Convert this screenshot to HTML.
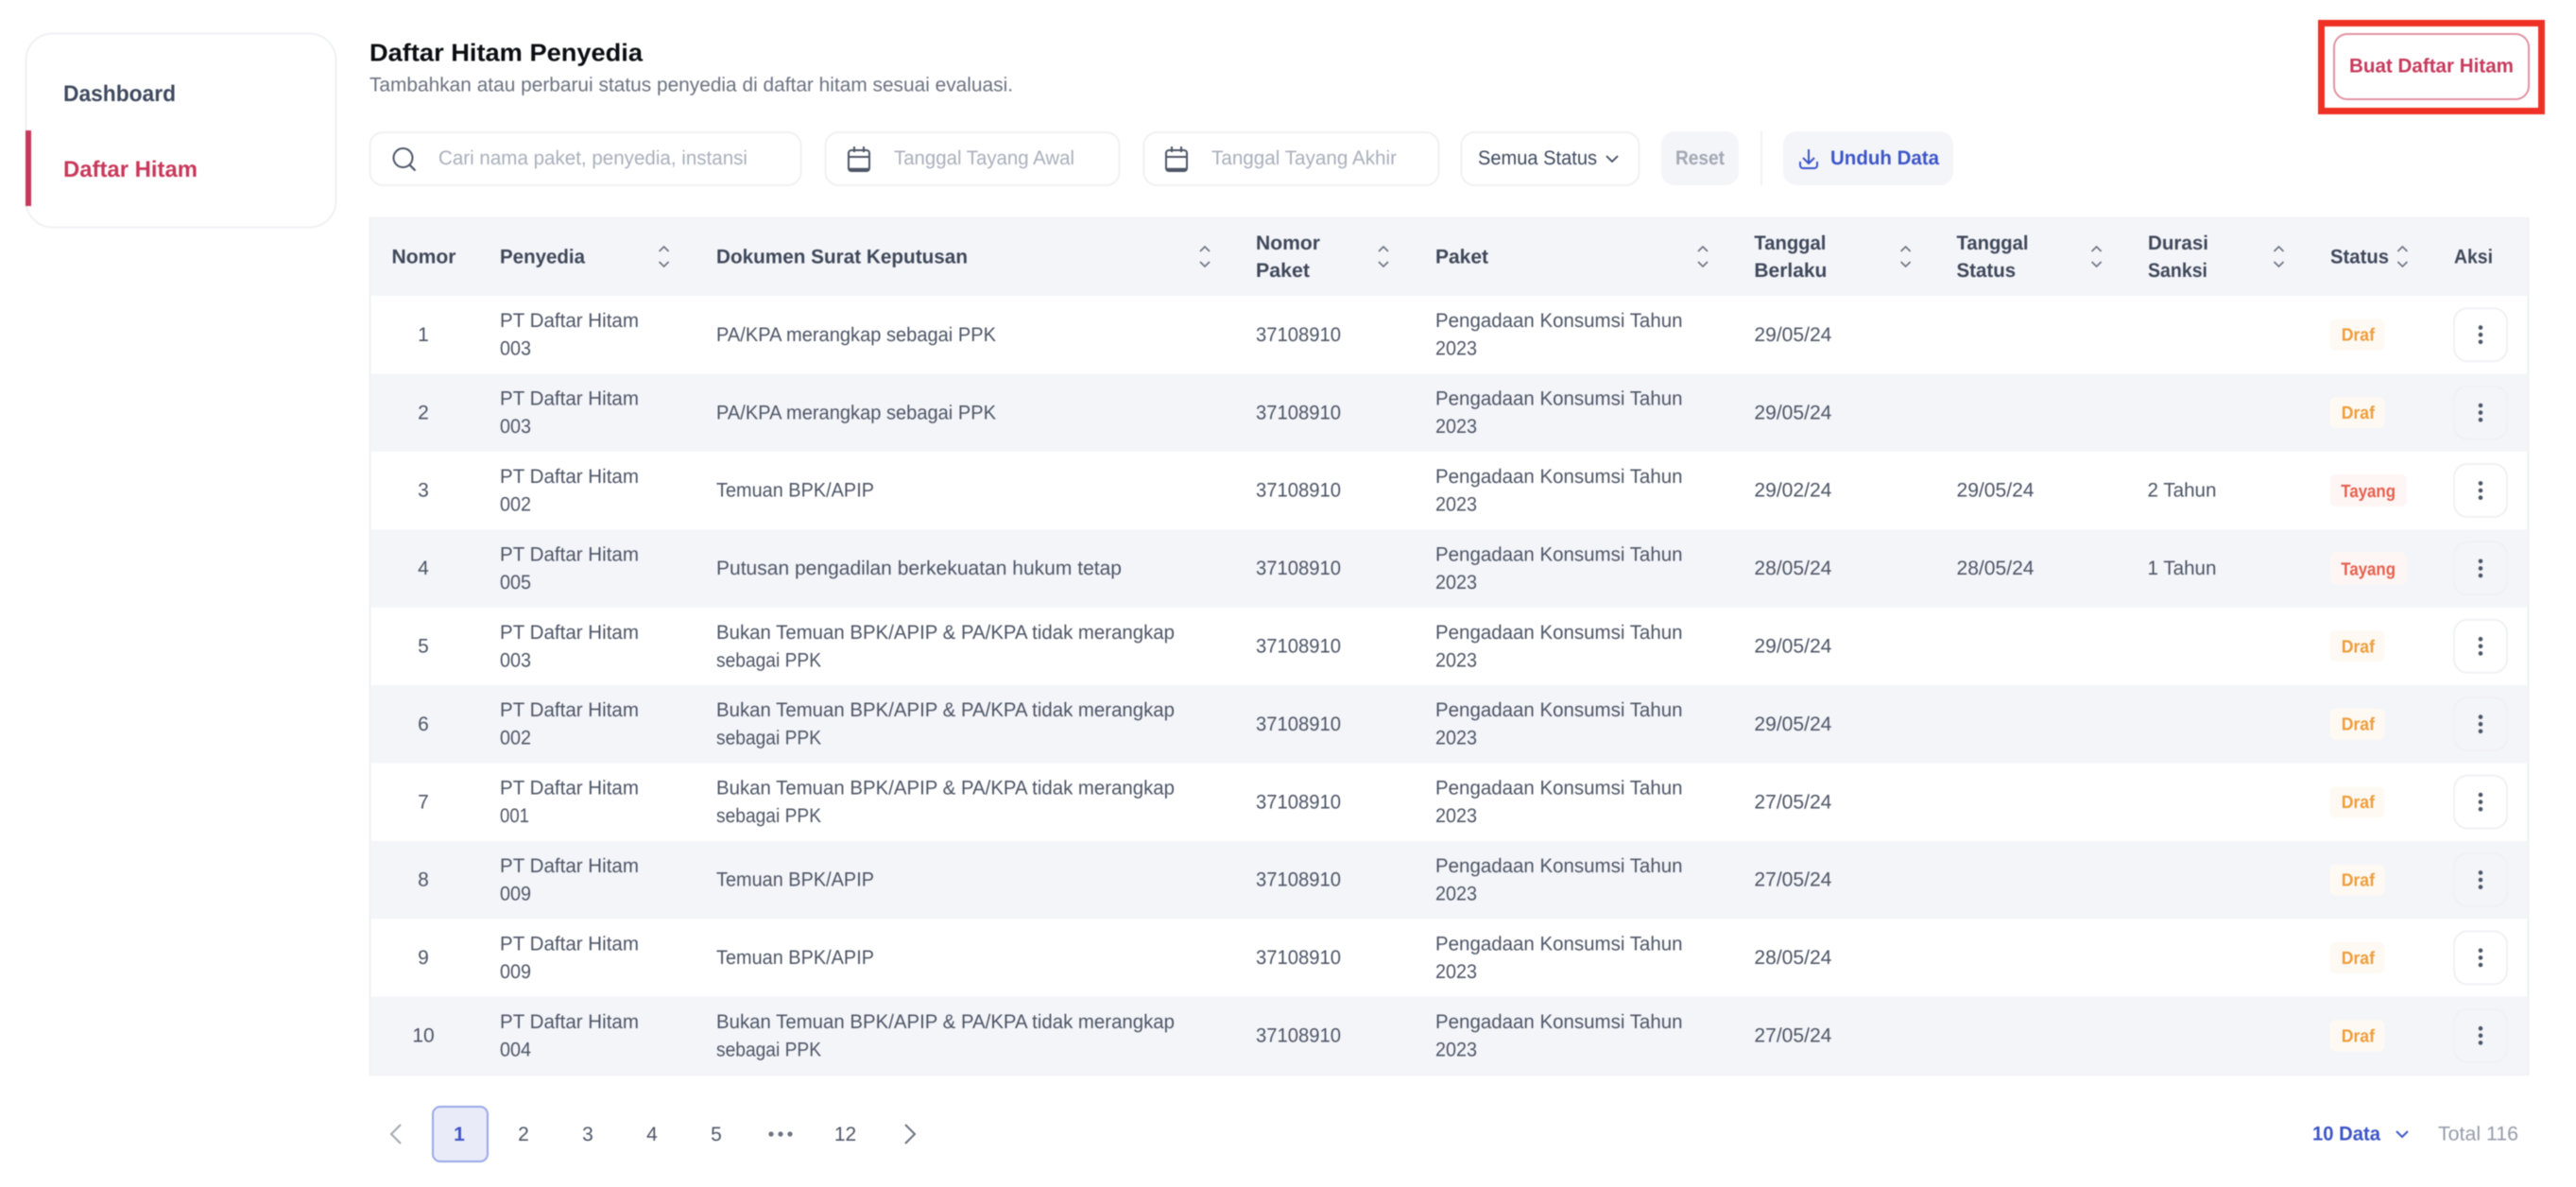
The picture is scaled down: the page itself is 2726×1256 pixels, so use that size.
<!DOCTYPE html>
<html lang="id">
<head>
<meta charset="utf-8">
<title>Daftar Hitam Penyedia</title>
<style>
html,body{margin:0;padding:0;background:#fff;width:2726px;height:1256px;overflow:hidden}
svg{display:block;filter:blur(.45px)}
text{font-family:"Liberation Sans",Arial,sans-serif;font-size:21px;fill:#4d5566;text-rendering:geometricPrecision}
.h{font-weight:700;fill:#3f485a}
.n{text-anchor:middle}
.ph{fill:#a9afbb}
.d{font-weight:700;fill:#ef9d3c;font-size:19px}
.t{font-weight:700;fill:#e5604f;font-size:19px}
.s{fill:none;stroke:#6b7280;stroke-width:1.6}
.box{fill:#fff;stroke:#f0f1f4;stroke-width:2}
</style>
</head>
<body>
<svg width="2726" height="1256" viewBox="0 0 2726 1256" xmlns="http://www.w3.org/2000/svg">
<defs>
<g id="sort"><path class="s" d="M-5 -5.5L0 -10.5L5 -5.5M-5 5.5L0 10.5L5 5.5"/></g>
<g id="dots" fill="#4d5566"><circle cx="2625" cy="-7.6" r="2.3"/><circle cx="2625" cy="0" r="2.3"/><circle cx="2625" cy="7.6" r="2.3"/></g>
<g id="cal" fill="none" stroke="#4d5566" stroke-width="2"><rect x="1" y="4" width="22" height="22" rx="3"/><path d="M1 11H23M7 0V6M17 0V6" /><path d="M2 24H22" stroke-width="2.5"/></g>
</defs>
<rect width="2726" height="1256" fill="#fff"/>

<!-- sidebar -->
<rect x="27.5" y="35.5" width="328" height="205" rx="28" fill="#fff" stroke="#f0f1f4" stroke-width="2"/>
<rect x="27" y="138" width="6" height="80" fill="#c8385a"/>
<text x="67" y="107" textLength="119" lengthAdjust="spacingAndGlyphs" style="font-size:24px;font-weight:700;fill:#3f4a5f">Dashboard</text>
<text x="67" y="187" textLength="142" lengthAdjust="spacingAndGlyphs" style="font-size:24px;font-weight:700;fill:#c8385a">Daftar Hitam</text>

<!-- heading -->
<text x="391" y="64.3" textLength="289" lengthAdjust="spacingAndGlyphs" style="font-size:26px;font-weight:700;fill:#0b0d12">Daftar Hitam Penyedia</text>
<text x="391" y="96.7" textLength="681" lengthAdjust="spacingAndGlyphs" style="fill:#6b7280">Tambahkan atau perbarui status penyedia di daftar hitam sesuai evaluasi.</text>

<!-- toolbar -->
<rect x="391.5" y="140" width="456" height="56" rx="14" class="box"/>
<circle cx="426.5" cy="167" r="10" fill="none" stroke="#4d5566" stroke-width="2"/>
<path d="M433.5 174.5L439.5 180.5" fill="none" stroke="#4d5566" stroke-width="2.2"/>
<text x="464" y="174" textLength="327" lengthAdjust="spacingAndGlyphs" class="ph">Cari nama paket, penyedia, instansi</text>

<rect x="873.5" y="140" width="311" height="56" rx="14" class="box"/>
<use href="#cal" x="897" y="155"/>
<text x="946" y="174" textLength="191" lengthAdjust="spacingAndGlyphs" class="ph">Tanggal Tayang Awal</text>

<rect x="1210.5" y="140" width="312" height="56" rx="14" class="box"/>
<use href="#cal" x="1233" y="155"/>
<text x="1282" y="174" textLength="196" lengthAdjust="spacingAndGlyphs" class="ph">Tanggal Tayang Akhir</text>

<rect x="1546.5" y="140" width="188" height="56" rx="14" class="box"/>
<text x="1564" y="174" textLength="126" lengthAdjust="spacingAndGlyphs" style="fill:#3f4a5f">Semua Status</text>
<path d="M1700 165L1706 171L1712 165" fill="none" stroke="#3f4a5f" stroke-width="1.8"/>

<rect x="1758" y="139" width="82" height="57" rx="14" fill="#f4f5f9"/>
<text x="1773" y="174" textLength="52" lengthAdjust="spacingAndGlyphs" style="fill:#a2a8b4;font-weight:700">Reset</text>

<rect x="1863" y="139" width="2" height="57" fill="#f0f1f4"/>

<rect x="1887" y="139" width="180" height="57" rx="14" fill="#f4f5f9"/>
<path d="M1914 158V172M1908 167L1914 173L1920 167M1905 171V175A3 3 0 0 0 1908 178H1920A3 3 0 0 0 1923 175V171" fill="none" stroke="#3d55c8" stroke-width="2"/>
<text x="1937" y="174" textLength="115" lengthAdjust="spacingAndGlyphs" style="font-weight:700;fill:#3d55c8">Unduh Data</text>

<!-- primary button with annotation -->
<rect x="2456.5" y="24.5" width="233" height="93" fill="none" stroke="#ee3124" stroke-width="7"/>
<rect x="2470" y="36" width="206" height="69" rx="14" fill="#fff" stroke="#e391a3" stroke-width="2"/>
<text x="2486" y="76.7" textLength="174" lengthAdjust="spacingAndGlyphs" style="font-weight:700;fill:#c73a5c">Buat Daftar Hitam</text>

<!-- table -->
<rect x="391.5" y="231" width="2284" height="906" fill="#fff" stroke="#eff0f3" stroke-width="2"/>
<rect x="392" y="231" width="2283" height="82" fill="#f4f5f9"/>
<rect x="392" y="395.4" width="2283" height="82.4" fill="#f4f5f9"/>
<rect x="392" y="560.2" width="2283" height="82.4" fill="#f4f5f9"/>
<rect x="392" y="725" width="2283" height="82.4" fill="#f4f5f9"/>
<rect x="392" y="889.8" width="2283" height="82.4" fill="#f4f5f9"/>
<rect x="392" y="1054.6" width="2283" height="82.4" fill="#f4f5f9"/>

<!-- header -->
<text class="h" x="414.5" y="278.3" textLength="68" lengthAdjust="spacingAndGlyphs">Nomor</text>
<text class="h" x="529" y="278.3" textLength="90" lengthAdjust="spacingAndGlyphs">Penyedia</text>
<use href="#sort" x="702.6" y="271.5"/>
<text class="h" x="758" y="278.3" textLength="266" lengthAdjust="spacingAndGlyphs">Dokumen Surat Keputusan</text>
<use href="#sort" x="1275" y="271.5"/>
<text class="h" x="1329" y="264" textLength="68" lengthAdjust="spacingAndGlyphs">Nomor</text>
<text class="h" x="1329" y="293" textLength="57" lengthAdjust="spacingAndGlyphs">Paket</text>
<use href="#sort" x="1464" y="271.5"/>
<text class="h" x="1519" y="278.3" textLength="56" lengthAdjust="spacingAndGlyphs">Paket</text>
<use href="#sort" x="1802" y="271.5"/>
<text class="h" x="1856.4" y="264" textLength="76" lengthAdjust="spacingAndGlyphs">Tanggal</text>
<text class="h" x="1856.4" y="293" textLength="77" lengthAdjust="spacingAndGlyphs">Berlaku</text>
<use href="#sort" x="2016.6" y="271.5"/>
<text class="h" x="2070.5" y="264" textLength="76" lengthAdjust="spacingAndGlyphs">Tanggal</text>
<text class="h" x="2070.5" y="293" textLength="62.6" lengthAdjust="spacingAndGlyphs">Status</text>
<use href="#sort" x="2218.6" y="271.5"/>
<text class="h" x="2273" y="264" textLength="64" lengthAdjust="spacingAndGlyphs">Durasi</text>
<text class="h" x="2273" y="293" textLength="63" lengthAdjust="spacingAndGlyphs">Sanksi</text>
<use href="#sort" x="2411.5" y="271.5"/>
<text class="h" x="2466" y="278.3" textLength="62" lengthAdjust="spacingAndGlyphs">Status</text>
<use href="#sort" x="2542.4" y="271.5"/>
<text class="h" x="2597" y="278.3" textLength="41" lengthAdjust="spacingAndGlyphs">Aksi</text>

<!-- row 1 -->
<g transform="translate(0,354.2)">
<text class="n" x="448" y="6.7">1</text>
<text x="529" y="-8" textLength="147" lengthAdjust="spacingAndGlyphs">PT Daftar Hitam</text>
<text x="529" y="21.5" textLength="33" lengthAdjust="spacingAndGlyphs">003</text>
<text x="758" y="6.7" textLength="296" lengthAdjust="spacingAndGlyphs">PA/KPA merangkap sebagai PPK</text>
<text x="1329" y="6.7" textLength="90" lengthAdjust="spacingAndGlyphs">37108910</text>
<text x="1519" y="-8" textLength="261.5" lengthAdjust="spacingAndGlyphs">Pengadaan Konsumsi Tahun</text>
<text x="1519" y="21.5" textLength="44" lengthAdjust="spacingAndGlyphs">2023</text>
<text x="1856.4" y="6.7" textLength="82" lengthAdjust="spacingAndGlyphs">29/05/24</text>
<rect x="2465.5" y="-16.5" width="58" height="33" rx="6" fill="#fefaf3"/>
<text class="d" x="2477.7" y="6.5" textLength="35.3" lengthAdjust="spacingAndGlyphs">Draf</text>
<rect x="2597" y="-28" width="56" height="56" rx="14" class="box"/>
<use href="#dots"/>
</g>
<!-- row 2 -->
<g transform="translate(0,436.6)">
<text class="n" x="448" y="6.7">2</text>
<text x="529" y="-8" textLength="147" lengthAdjust="spacingAndGlyphs">PT Daftar Hitam</text>
<text x="529" y="21.5" textLength="33" lengthAdjust="spacingAndGlyphs">003</text>
<text x="758" y="6.7" textLength="296" lengthAdjust="spacingAndGlyphs">PA/KPA merangkap sebagai PPK</text>
<text x="1329" y="6.7" textLength="90" lengthAdjust="spacingAndGlyphs">37108910</text>
<text x="1519" y="-8" textLength="261.5" lengthAdjust="spacingAndGlyphs">Pengadaan Konsumsi Tahun</text>
<text x="1519" y="21.5" textLength="44" lengthAdjust="spacingAndGlyphs">2023</text>
<text x="1856.4" y="6.7" textLength="82" lengthAdjust="spacingAndGlyphs">29/05/24</text>
<rect x="2465.5" y="-16.5" width="58" height="33" rx="6" fill="#fefaf3"/>
<text class="d" x="2477.7" y="6.5" textLength="35.3" lengthAdjust="spacingAndGlyphs">Draf</text>
<rect x="2597" y="-28" width="56" height="56" rx="14" class="box" style="fill:none"/>
<use href="#dots"/>
</g>
<!-- row 3 -->
<g transform="translate(0,519)">
<text class="n" x="448" y="6.7">3</text>
<text x="529" y="-8" textLength="147" lengthAdjust="spacingAndGlyphs">PT Daftar Hitam</text>
<text x="529" y="21.5" textLength="33" lengthAdjust="spacingAndGlyphs">002</text>
<text x="758" y="6.7" textLength="167" lengthAdjust="spacingAndGlyphs">Temuan BPK/APIP</text>
<text x="1329" y="6.7" textLength="90" lengthAdjust="spacingAndGlyphs">37108910</text>
<text x="1519" y="-8" textLength="261.5" lengthAdjust="spacingAndGlyphs">Pengadaan Konsumsi Tahun</text>
<text x="1519" y="21.5" textLength="44" lengthAdjust="spacingAndGlyphs">2023</text>
<text x="1856.4" y="6.7" textLength="82" lengthAdjust="spacingAndGlyphs">29/02/24</text>
<text x="2070.5" y="6.7" textLength="82" lengthAdjust="spacingAndGlyphs">29/05/24</text>
<text x="2272.5" y="6.7" textLength="73" lengthAdjust="spacingAndGlyphs">2 Tahun</text>
<rect x="2466" y="-17" width="81" height="34" rx="6" fill="#fef6f4"/>
<text class="t" x="2477.3" y="7" textLength="57.7" lengthAdjust="spacingAndGlyphs">Tayang</text>
<rect x="2597" y="-28" width="56" height="56" rx="14" class="box"/>
<use href="#dots"/>
</g>
<!-- row 4 -->
<g transform="translate(0,601.4)">
<text class="n" x="448" y="6.7">4</text>
<text x="529" y="-8" textLength="147" lengthAdjust="spacingAndGlyphs">PT Daftar Hitam</text>
<text x="529" y="21.5" textLength="33" lengthAdjust="spacingAndGlyphs">005</text>
<text x="758" y="6.7" textLength="429" lengthAdjust="spacingAndGlyphs">Putusan pengadilan berkekuatan hukum tetap</text>
<text x="1329" y="6.7" textLength="90" lengthAdjust="spacingAndGlyphs">37108910</text>
<text x="1519" y="-8" textLength="261.5" lengthAdjust="spacingAndGlyphs">Pengadaan Konsumsi Tahun</text>
<text x="1519" y="21.5" textLength="44" lengthAdjust="spacingAndGlyphs">2023</text>
<text x="1856.4" y="6.7" textLength="82" lengthAdjust="spacingAndGlyphs">28/05/24</text>
<text x="2070.5" y="6.7" textLength="82" lengthAdjust="spacingAndGlyphs">28/05/24</text>
<text x="2272.5" y="6.7" textLength="73" lengthAdjust="spacingAndGlyphs">1 Tahun</text>
<rect x="2466" y="-17" width="81" height="34" rx="6" fill="#fef6f4"/>
<text class="t" x="2477.3" y="7" textLength="57.7" lengthAdjust="spacingAndGlyphs">Tayang</text>
<rect x="2597" y="-28" width="56" height="56" rx="14" class="box" style="fill:none"/>
<use href="#dots"/>
</g>
<!-- row 5 -->
<g transform="translate(0,683.8)">
<text class="n" x="448" y="6.7">5</text>
<text x="529" y="-8" textLength="147" lengthAdjust="spacingAndGlyphs">PT Daftar Hitam</text>
<text x="529" y="21.5" textLength="33" lengthAdjust="spacingAndGlyphs">003</text>
<text x="758" y="-8" textLength="485" lengthAdjust="spacingAndGlyphs">Bukan Temuan BPK/APIP &amp; PA/KPA tidak merangkap</text>
<text x="758" y="21.5" textLength="111" lengthAdjust="spacingAndGlyphs">sebagai PPK</text>
<text x="1329" y="6.7" textLength="90" lengthAdjust="spacingAndGlyphs">37108910</text>
<text x="1519" y="-8" textLength="261.5" lengthAdjust="spacingAndGlyphs">Pengadaan Konsumsi Tahun</text>
<text x="1519" y="21.5" textLength="44" lengthAdjust="spacingAndGlyphs">2023</text>
<text x="1856.4" y="6.7" textLength="82" lengthAdjust="spacingAndGlyphs">29/05/24</text>
<rect x="2465.5" y="-16.5" width="58" height="33" rx="6" fill="#fefaf3"/>
<text class="d" x="2477.7" y="6.5" textLength="35.3" lengthAdjust="spacingAndGlyphs">Draf</text>
<rect x="2597" y="-28" width="56" height="56" rx="14" class="box"/>
<use href="#dots"/>
</g>
<!-- row 6 -->
<g transform="translate(0,766.2)">
<text class="n" x="448" y="6.7">6</text>
<text x="529" y="-8" textLength="147" lengthAdjust="spacingAndGlyphs">PT Daftar Hitam</text>
<text x="529" y="21.5" textLength="33" lengthAdjust="spacingAndGlyphs">002</text>
<text x="758" y="-8" textLength="485" lengthAdjust="spacingAndGlyphs">Bukan Temuan BPK/APIP &amp; PA/KPA tidak merangkap</text>
<text x="758" y="21.5" textLength="111" lengthAdjust="spacingAndGlyphs">sebagai PPK</text>
<text x="1329" y="6.7" textLength="90" lengthAdjust="spacingAndGlyphs">37108910</text>
<text x="1519" y="-8" textLength="261.5" lengthAdjust="spacingAndGlyphs">Pengadaan Konsumsi Tahun</text>
<text x="1519" y="21.5" textLength="44" lengthAdjust="spacingAndGlyphs">2023</text>
<text x="1856.4" y="6.7" textLength="82" lengthAdjust="spacingAndGlyphs">29/05/24</text>
<rect x="2465.5" y="-16.5" width="58" height="33" rx="6" fill="#fefaf3"/>
<text class="d" x="2477.7" y="6.5" textLength="35.3" lengthAdjust="spacingAndGlyphs">Draf</text>
<rect x="2597" y="-28" width="56" height="56" rx="14" class="box" style="fill:none"/>
<use href="#dots"/>
</g>
<!-- row 7 -->
<g transform="translate(0,848.6)">
<text class="n" x="448" y="6.7">7</text>
<text x="529" y="-8" textLength="147" lengthAdjust="spacingAndGlyphs">PT Daftar Hitam</text>
<text x="529" y="21.5" textLength="31" lengthAdjust="spacingAndGlyphs">001</text>
<text x="758" y="-8" textLength="485" lengthAdjust="spacingAndGlyphs">Bukan Temuan BPK/APIP &amp; PA/KPA tidak merangkap</text>
<text x="758" y="21.5" textLength="111" lengthAdjust="spacingAndGlyphs">sebagai PPK</text>
<text x="1329" y="6.7" textLength="90" lengthAdjust="spacingAndGlyphs">37108910</text>
<text x="1519" y="-8" textLength="261.5" lengthAdjust="spacingAndGlyphs">Pengadaan Konsumsi Tahun</text>
<text x="1519" y="21.5" textLength="44" lengthAdjust="spacingAndGlyphs">2023</text>
<text x="1856.4" y="6.7" textLength="82" lengthAdjust="spacingAndGlyphs">27/05/24</text>
<rect x="2465.5" y="-16.5" width="58" height="33" rx="6" fill="#fefaf3"/>
<text class="d" x="2477.7" y="6.5" textLength="35.3" lengthAdjust="spacingAndGlyphs">Draf</text>
<rect x="2597" y="-28" width="56" height="56" rx="14" class="box"/>
<use href="#dots"/>
</g>
<!-- row 8 -->
<g transform="translate(0,931)">
<text class="n" x="448" y="6.7">8</text>
<text x="529" y="-8" textLength="147" lengthAdjust="spacingAndGlyphs">PT Daftar Hitam</text>
<text x="529" y="21.5" textLength="33" lengthAdjust="spacingAndGlyphs">009</text>
<text x="758" y="6.7" textLength="167" lengthAdjust="spacingAndGlyphs">Temuan BPK/APIP</text>
<text x="1329" y="6.7" textLength="90" lengthAdjust="spacingAndGlyphs">37108910</text>
<text x="1519" y="-8" textLength="261.5" lengthAdjust="spacingAndGlyphs">Pengadaan Konsumsi Tahun</text>
<text x="1519" y="21.5" textLength="44" lengthAdjust="spacingAndGlyphs">2023</text>
<text x="1856.4" y="6.7" textLength="82" lengthAdjust="spacingAndGlyphs">27/05/24</text>
<rect x="2465.5" y="-16.5" width="58" height="33" rx="6" fill="#fefaf3"/>
<text class="d" x="2477.7" y="6.5" textLength="35.3" lengthAdjust="spacingAndGlyphs">Draf</text>
<rect x="2597" y="-28" width="56" height="56" rx="14" class="box" style="fill:none"/>
<use href="#dots"/>
</g>
<!-- row 9 -->
<g transform="translate(0,1013.4)">
<text class="n" x="448" y="6.7">9</text>
<text x="529" y="-8" textLength="147" lengthAdjust="spacingAndGlyphs">PT Daftar Hitam</text>
<text x="529" y="21.5" textLength="33" lengthAdjust="spacingAndGlyphs">009</text>
<text x="758" y="6.7" textLength="167" lengthAdjust="spacingAndGlyphs">Temuan BPK/APIP</text>
<text x="1329" y="6.7" textLength="90" lengthAdjust="spacingAndGlyphs">37108910</text>
<text x="1519" y="-8" textLength="261.5" lengthAdjust="spacingAndGlyphs">Pengadaan Konsumsi Tahun</text>
<text x="1519" y="21.5" textLength="44" lengthAdjust="spacingAndGlyphs">2023</text>
<text x="1856.4" y="6.7" textLength="82" lengthAdjust="spacingAndGlyphs">28/05/24</text>
<rect x="2465.5" y="-16.5" width="58" height="33" rx="6" fill="#fefaf3"/>
<text class="d" x="2477.7" y="6.5" textLength="35.3" lengthAdjust="spacingAndGlyphs">Draf</text>
<rect x="2597" y="-28" width="56" height="56" rx="14" class="box"/>
<use href="#dots"/>
</g>
<!-- row 10 -->
<g transform="translate(0,1095.8)">
<text class="n" x="448" y="6.7">10</text>
<text x="529" y="-8" textLength="147" lengthAdjust="spacingAndGlyphs">PT Daftar Hitam</text>
<text x="529" y="21.5" textLength="33" lengthAdjust="spacingAndGlyphs">004</text>
<text x="758" y="-8" textLength="485" lengthAdjust="spacingAndGlyphs">Bukan Temuan BPK/APIP &amp; PA/KPA tidak merangkap</text>
<text x="758" y="21.5" textLength="111" lengthAdjust="spacingAndGlyphs">sebagai PPK</text>
<text x="1329" y="6.7" textLength="90" lengthAdjust="spacingAndGlyphs">37108910</text>
<text x="1519" y="-8" textLength="261.5" lengthAdjust="spacingAndGlyphs">Pengadaan Konsumsi Tahun</text>
<text x="1519" y="21.5" textLength="44" lengthAdjust="spacingAndGlyphs">2023</text>
<text x="1856.4" y="6.7" textLength="82" lengthAdjust="spacingAndGlyphs">27/05/24</text>
<rect x="2465.5" y="-16.5" width="58" height="33" rx="6" fill="#fefaf3"/>
<text class="d" x="2477.7" y="6.5" textLength="35.3" lengthAdjust="spacingAndGlyphs">Draf</text>
<rect x="2597" y="-28" width="56" height="56" rx="14" class="box" style="fill:none"/>
<use href="#dots"/>
</g>

<!-- pagination -->
<path d="M424 1190L414 1200L424 1210" fill="none" stroke="#a2a8b4" stroke-width="2"/>
<rect x="458" y="1171" width="58" height="58" rx="8" fill="#e9ebf8" stroke="#9aa8e8" stroke-width="2"/>
<text class="n" x="486" y="1207" style="font-weight:700;fill:#3d55c8">1</text>
<text class="n" x="554" y="1207">2</text>
<text class="n" x="622" y="1207">3</text>
<text class="n" x="690" y="1207">4</text>
<text class="n" x="758" y="1207">5</text>
<g fill="#6b7280"><circle cx="816" cy="1200" r="2.6"/><circle cx="826" cy="1200" r="2.6"/><circle cx="836" cy="1200" r="2.6"/></g>
<text class="n" x="894.5" y="1207">12</text>
<path d="M958 1190L968 1200L958 1210" fill="none" stroke="#6b7280" stroke-width="2"/>

<text x="2447" y="1206.7" textLength="72" lengthAdjust="spacingAndGlyphs" style="font-weight:700;fill:#3d55c8">10 Data</text>
<path d="M2536 1197L2542 1203L2548 1197" fill="none" stroke="#3d55c8" stroke-width="2"/>
<text x="2580" y="1206.7" textLength="85" lengthAdjust="spacingAndGlyphs" style="fill:#969daa">Total 116</text>
</svg>
</body>
</html>
